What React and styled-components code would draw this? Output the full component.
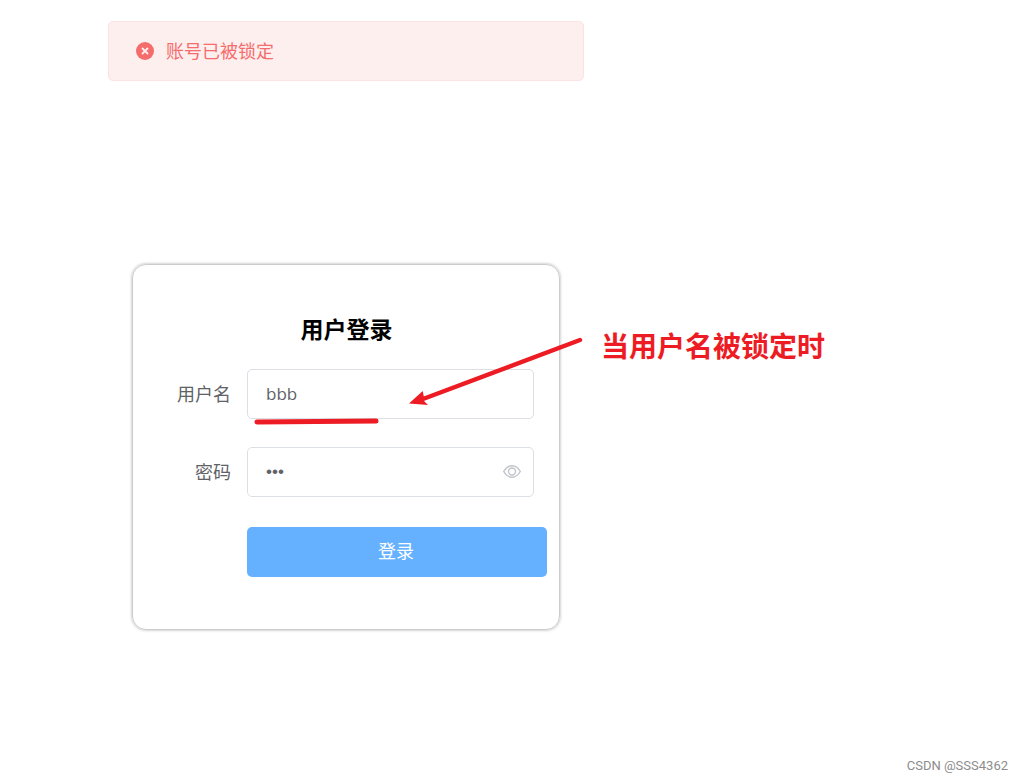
import React, {useState} from "react";
import styled, {createGlobalStyle} from "styled-components";

const GlobalStyle = createGlobalStyle`
  * {
    box-sizing: border-box;
  }
  body {
    margin: 0;
    background: #fff;
    color: #606266;
    font-family: "Noto Sans CJK SC", sans-serif;
    font-size: 18px;
    line-height: 26px;
  }
`;

const Page = styled.div`
  display: flex;
  flex-direction: column;
  min-height: 100vh;
`;

const LoginPane = styled.main`
  flex: 1;
  display: flex;
  flex-direction: column;
  align-items: center;
  width: 100%;
  max-width: 692px;
  padding: 21px 0 40px;
`;

const Alert = styled.div`
  display: flex;
  align-items: center;
  gap: 12px;
  width: 100%;
  max-width: 476px;
  height: 60px;
  padding: 0 27px;
  border: 1px solid #fde2e2;
  border-radius: 5px;
  background: #feefef;
  color: #f56c6c;
`;

const AlertText = styled.span`
  padding-bottom: 2px;
`;

const Card = styled.section`
  position: relative;
  width: 100%;
  max-width: 428px;
  margin-top: 183px;
  padding: 46px 12px 52px 29px;
  border: 1px solid #ccc;
  border-radius: 14px;
  box-shadow: 0 0 3px #aaa;
`;

const Title = styled.h3`
  margin: 0 16px 24px 0;
  text-align: center;
  color: #000;
  font-size: 23px;
  line-height: 34px;
  font-weight: 700;
`;

const Field = styled.div`
  display: flex;
  align-items: center;
  gap: 16px;
  margin-bottom: 28px;
  padding-right: 13px;
`;

const Label = styled.label`
  flex: 0 0 69px;
  padding-bottom: 2px;
  text-align: right;
  white-space: nowrap;
`;

const InputBox = styled.div`
  flex: 1;
  display: flex;
  align-items: center;
  min-width: 0;
  height: 50px;
  padding: 0 12px 0 18px;
  border: 1px solid #dcdfe6;
  border-radius: 5px;
`;

const Input = styled.input`
  flex: 1;
  min-width: 0;
  padding: 0;
  border: 0;
  outline: 0;
  background: none;
  color: #606266;
  font-family: ${props => props.type === "password" ? '"Liberation Sans"' : '"Open Sans"'}, sans-serif;
  font-size: 17px;
  line-height: 24px;
`;

const EyeButton = styled.button`
  display: flex;
  padding: 0;
  border: 0;
  background: none;
  color: #c0c4cc;
  cursor: pointer;
`;

const SubmitButton = styled.button`
  display: block;
  width: calc(100% - 85px);
  height: 50px;
  margin: 30px 0 0 85px;
  padding: 0 2px 4px 0;
  border: 0;
  border-radius: 5px;
  background: #66b1ff;
  color: #fff;
  font-family: inherit;
  font-size: 18px;
  cursor: pointer;
`;

const Marks = styled.svg`
  position: absolute;
  left: 119px;
  top: 67px;
  pointer-events: none;
`;

const Note = styled.p`
  position: absolute;
  left: 468px;
  top: 60px;
  margin: 0;
  white-space: nowrap;
  color: #ed1c24;
  font-size: 28px;
  line-height: 40px;
  font-weight: 700;
`;

const Watermark = styled.footer`
  align-self: flex-end;
  padding: 0 15px 6px 0;
  color: #8c8c8c;
  font-family: Roboto, sans-serif;
  font-size: 13px;
  line-height: 16px;
`;

const ErrorIcon = () => (
    <svg width="18" height="18" viewBox="0 0 18 18" aria-hidden="true">
        <circle cx="9" cy="9" r="9" fill="#f56c6c"/>
        <path d="M6 6l6 6M12 6l-6 6" stroke="#feefef" strokeWidth="1.8"/>
    </svg>
);

const EyeIcon = () => (
    <svg width="18" height="18" viewBox="0 0 18 18" fill="none" stroke="currentColor" strokeWidth="1.4" aria-hidden="true">
        <path d="M.7 8.500C2.800 4.800 5.600 2.800 9 2.800S15.200 4.800 17.300 8.500C15.200 12.200 12.400 14.200 9 14.200S2.800 12.200.7 8.500z"/>
        <circle cx="9" cy="8.500" r="3.500"/>
    </svg>
);

export default function App() {
    const [username, setUsername] = useState("bbb");
    const [password, setPassword] = useState("bbb");
    const [visible, setVisible] = useState(false);

    return (
        <>
            <GlobalStyle/>
            <Page>
                <LoginPane>
                    <Alert role="alert">
                        <ErrorIcon/>
                        <AlertText>账号已被锁定</AlertText>
                    </Alert>
                    <Card>
                        <form onSubmit={e => e.preventDefault()}>
                            <Title>用户登录</Title>
                            <Field>
                                <Label htmlFor="username">用户名</Label>
                                <InputBox>
                                    <Input id="username" type="text" value={username}
                                           onChange={e => setUsername(e.target.value)}/>
                                </InputBox>
                            </Field>
                            <Field>
                                <Label htmlFor="password">密码</Label>
                                <InputBox>
                                    <Input id="password" type={visible ? "text" : "password"} value={password}
                                           onChange={e => setPassword(e.target.value)}/>
                                    <EyeButton type="button" aria-label="显示密码" onClick={() => setVisible(!visible)}>
                                        <EyeIcon/>
                                    </EyeButton>
                                </InputBox>
                            </Field>
                            <SubmitButton type="submit">登录</SubmitButton>
                        </form>
                        {/* underline below the user name and arrow from the note */}
                        <Marks width="340" height="100" viewBox="252 332 340 100" aria-hidden="true">
                            <path d="M257 422L376 421" stroke="#ed1c24" strokeWidth="5" strokeLinecap="round"/>
                            <path d="M580 340L423 399" stroke="#ed1c24" strokeWidth="4.500" strokeLinecap="round"/>
                            <path d="M409 403.600L422.700 391L424 397.500L424 401L428 405z" fill="#ed1c24"/>
                        </Marks>
                        <Note>当用户名被锁定时</Note>
                    </Card>
                </LoginPane>
                <Watermark>CSDN @SSS4362</Watermark>
            </Page>
        </>
    );
}
